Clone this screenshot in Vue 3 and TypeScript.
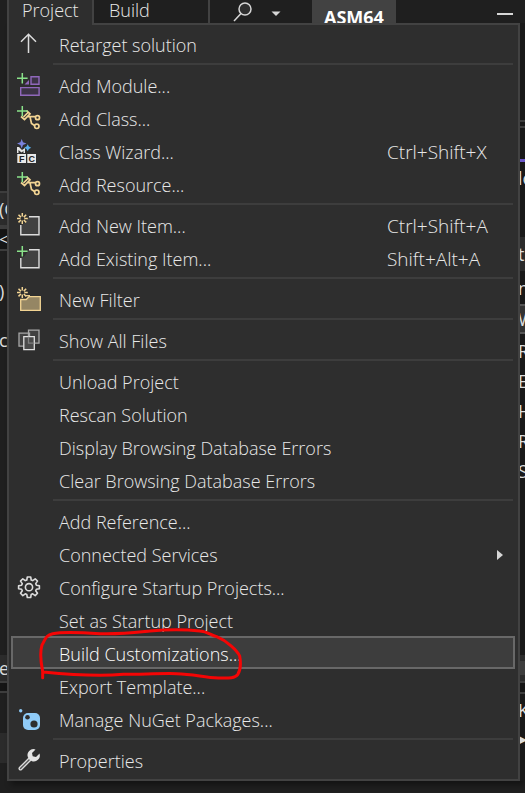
<script setup lang="ts">
type IconName = 'up' | 'module' | 'class' | 'wizard' | 'newItem' | 'addItem' | 'folder' | 'files' | 'gear' | 'nuget' | 'wrench'

interface MenuItem {
  label: string
  icon?: IconName
  keys?: string
  submenu?: boolean
  active?: boolean
}

interface RailBand {
  height: number
  tone: 'plain' | 'row' | 'line' | 'dark' | 'accent' | 'lit'
  text?: string
}

const groups: MenuItem[][] = [
  [{ label: 'Retarget solution', icon: 'up' }],
  [
    { label: 'Add Module...', icon: 'module' },
    { label: 'Add Class...', icon: 'class' },
    { label: 'Class Wizard...', icon: 'wizard', keys: 'Ctrl+Shift+X' },
    { label: 'Add Resource...', icon: 'class' },
  ],
  [
    { label: 'Add New Item...', icon: 'newItem', keys: 'Ctrl+Shift+A' },
    { label: 'Add Existing Item...', icon: 'addItem', keys: 'Shift+Alt+A' },
  ],
  [{ label: 'New Filter', icon: 'folder' }],
  [{ label: 'Show All Files', icon: 'files' }],
  [
    { label: 'Unload Project' },
    { label: 'Rescan Solution' },
    { label: 'Display Browsing Database Errors' },
    { label: 'Clear Browsing Database Errors' },
  ],
  [
    { label: 'Add Reference...' },
    { label: 'Connected Services', submenu: true },
    { label: 'Configure Startup Projects...', icon: 'gear' },
    { label: 'Set as Startup Project' },
    { label: 'Build Customizations...', active: true },
    { label: 'Export Template...' },
    { label: 'Manage NuGet Packages...', icon: 'nuget' },
  ],
  [{ label: 'Properties', icon: 'wrench' }],
]

const leftRail: RailBand[] = [
  { height: 168, tone: 'plain' },
  { height: 2, tone: 'line' },
  { height: 32, tone: 'row', text: '(G' },
  { height: 4, tone: 'line' },
  { height: 20, tone: 'dark', text: '<' },
  { height: 2, tone: 'line' },
  { height: 26, tone: 'plain' },
  { height: 28, tone: 'plain', text: ')' },
  { height: 22, tone: 'plain' },
  { height: 26, tone: 'plain', text: 'c' },
  { height: 302, tone: 'plain' },
  { height: 26, tone: 'row', text: 'e' },
  { height: 2, tone: 'line' },
  { height: 8, tone: 'dark' },
  { height: 2, tone: 'line' },
  { height: 40, tone: 'plain' },
  { height: 30, tone: 'row' },
]

const rightRail: RailBand[] = [
  { height: 97, tone: 'plain' },
  { height: 2, tone: 'line' },
  { height: 4, tone: 'plain' },
  { height: 2, tone: 'line' },
  { height: 31, tone: 'plain' },
  { height: 3, tone: 'accent' },
  { height: 32, tone: 'plain', text: 'lo' },
  { height: 43, tone: 'plain' },
  { height: 34, tone: 'row', text: 't' },
  { height: 33, tone: 'plain', text: 'n' },
  { height: 30, tone: 'lit', text: 'W' },
  { height: 2, tone: 'plain' },
  { height: 30, tone: 'plain', text: 'R' },
  { height: 30, tone: 'plain', text: 'E' },
  { height: 30, tone: 'plain', text: 'H' },
  { height: 30, tone: 'plain', text: 'R' },
  { height: 30, tone: 'plain', text: 'S' },
  { height: 169, tone: 'plain' },
  { height: 6, tone: 'row' },
  { height: 14, tone: 'line' },
  { height: 6, tone: 'row' },
  { height: 2, tone: 'line' },
  { height: 9, tone: 'dark' },
  { height: 2, tone: 'line' },
  { height: 32, tone: 'plain', text: 'K' },
  { height: 24, tone: 'plain', text: '▸' },
]
</script>

<template>
  <div class="window">
    <header class="bar">
      <button class="tab open" type="button">Project</button>
      <button class="tab build" type="button">Build</button>
      <button class="search" type="button" aria-label="Search">
        <svg width="20" height="20" viewBox="0 0 20 20">
          <circle cx="12" cy="7" r="6" fill="#2e2e2e" />
          <path d="M8 11.5 1 19" />
        </svg>
        <svg class="caret" width="10" height="6" viewBox="0 0 10 6"><path class="solid" d="M0.500 0.500h9L5 5z" /></svg>
      </button>
      <span class="solution">ASM64</span>
      <button class="minimize" type="button" aria-label="Minimize">
        <svg width="16" height="2" viewBox="0 0 16 2"><path class="solid" d="M0 0h16v2H0z" /></svg>
      </button>
    </header>

    <main class="body">
      <div class="rail left">
        <div v-for="(band, i) in leftRail" :key="i" class="band" :class="band.tone" :style="{ height: band.height + 'px' }">
          {{ band.text }}
        </div>
      </div>

      <nav class="menu" aria-label="Project">
        <div v-for="(group, g) in groups" :key="g" class="group">
          <button v-for="item in group" :key="item.label" class="item" :class="{ active: item.active }" type="button">
            <span class="icon">
              <svg v-if="item.icon" width="24" height="24" viewBox="0 0 24 24" aria-hidden="true">
                <g v-if="item.icon === 'up'" class="stroke">
                  <path d="M11.500 21V2.500M4 9.700l7.500-7.500 7.500 7.500" stroke-width="1.500" />
                </g>
                <g v-else-if="item.icon === 'module'">
                  <path d="M14 3.700h8v7.600h-8zM3.700 14.600h18.400v7.600H3.700z" fill="#3c3346" stroke="#9068bb" stroke-width="1.400" />
                  <path d="M12 7v4.500H7.500z" fill="#9068bb" />
                  <path d="M5.300 0v10.600M0 5.300h10.600" stroke="#8ae28a" stroke-width="1.500" />
                </g>
                <g v-else-if="item.icon === 'class'">
                  <g fill="none" stroke="#f2d493" stroke-width="1.700">
                    <path d="M9.500 4.500l3.500 3.300-5.500 5.700L4 10.500M6.500 11l5-5M10.500 10.700h8M13 10.700l1.500 6.800 3 2" />
                    <circle cx="20.500" cy="11.700" r="2" />
                    <circle cx="19.800" cy="20.300" r="2.200" />
                  </g>
                  <path d="M5.300 0v10.300M0 5h10.600" stroke="#8ae28a" stroke-width="1.500" />
                </g>
                <g v-else-if="item.icon === 'wizard'">
                  <path d="M0 8h2l3 3 3-2v5H6.500v-2L4.500 13.500 1.500 11v3H0z" fill="#e4e4e4" />
                  <path d="M0.300 15H9v9H0.300zM10.300 15H19v9h-8.700z" fill="#e8e8e8" />
                  <text x="2" y="22.800" class="glyph">F</text>
                  <text x="11.500" y="22.800" class="glyph">C</text>
                  <path d="M4.700 0l1.300 3.300 3.500 1.300L6 6 4.700 9.500 3.400 6 0 4.600l3.400-1.300z" fill="#7a83dd" />
                  <path d="M10.700 5.200l1.200 2.300 2.300 1.200-2.300 1.200-1.200 2.300-1.200-2.300-2.300-1.200 2.300-1.200z" fill="#5aaeea" />
                </g>
                <g v-else-if="item.icon === 'newItem'">
                  <path d="M12 3.800h10v18H3.800V12l3-1z" fill="#414141" />
                  <path d="M12 3.800h10v18H3.800V12" fill="none" stroke="#dcdcdc" stroke-width="1.400" />
                  <path class="spark" d="M5.300 0v3.500M5.300 7.500V11M0 5.500h3.500M7.300 5.500h3.500M1.500 1.700l2.400 2.400M6.800 7l2.400 2.400M9.200 1.700L6.800 4.100M3.900 7L1.500 9.400" />
                </g>
                <g v-else-if="item.icon === 'addItem'">
                  <path d="M12 3.800h10v18H3.800V12l3-1z" fill="#414141" />
                  <path d="M12 3.800h10v18H3.800V12" fill="none" stroke="#dcdcdc" stroke-width="1.400" />
                  <path d="M5.300 0v10.600M0 5.300h10.600" stroke="#8ae28a" stroke-width="1.500" />
                </g>
                <g v-else-if="item.icon === 'folder'">
                  <path d="M3.700 12.500h5.500L12 9.700h11.300v13.600H3.700z" fill="#958664" stroke="#f2d493" stroke-width="1.300" />
                  <path d="M9 8.700h4" stroke="#f2d493" stroke-width="1.300" />
                  <path class="spark" d="M5.300 0v3.500M5.300 7.500V11M0 5.500h3.500M7.300 5.500h3.500M1.500 1.700l2.400 2.400M6.800 7l2.400 2.400M9.200 1.700L6.800 4.100M3.900 7L1.500 9.400" />
                </g>
                <g v-else-if="item.icon === 'files'" stroke-width="1.300">
                  <path d="M11.500 2.200H22v13H11.500zM2 5.200h10.500v13H2z" fill="#414141" stroke="#a8a8a8" />
                  <path d="M6.800 8.700h10.500v13H6.800z" fill="#4a4a4a" stroke="#e0e0e0" />
                  <path d="M11.500 8.700v6.500h5.800" fill="none" stroke="#808080" />
                </g>
                <g v-else-if="item.icon === 'gear'" class="stroke">
                  <path
                    stroke-width="1.600"
                    stroke-linejoin="round"
                    d="M10.300 2h3.400l.5 3 1.500.6 2.500-1.800 2.300 2.300-1.800 2.500.7 1.600 3 .5v3l-3 .5-.7 1.600 1.800 2.500-2.300 2.300-2.500-1.800-1.500.7-.5 3h-3.400l-.5-3-1.500-.7-2.500 1.800-2.300-2.300 1.800-2.500-.7-1.600-3-.5v-3l3-.5.7-1.600-1.800-2.500 2.300-2.300 2.500 1.800 1.500-.6z"
                  />
                  <circle cx="12" cy="12.200" r="3.600" stroke-width="1.600" />
                </g>
                <g v-else-if="item.icon === 'nuget'">
                  <circle cx="3.700" cy="3.700" r="1.700" fill="#8fcbf7" />
                  <rect x="6" y="6" width="17" height="17" rx="5" fill="#8fcbf7" />
                  <circle cx="10.500" cy="10.300" r="2.300" fill="#2e2e2e" />
                  <circle cx="17" cy="17" r="3.600" fill="#2e2e2e" />
                </g>
                <g v-else-if="item.icon === 'wrench'">
                  <path d="M12.500 11.500L3.500 20.500" stroke="#dcdcdc" stroke-width="4" stroke-linecap="round" />
                  <path d="M12 12L3.500 20.500" stroke="#555" stroke-width="1.400" stroke-linecap="round" />
                  <path d="M18.500 1.500a6 6 0 0 0-7.500 8l3.500 3.500a6 6 0 0 0 8-7.500L19 9l-3.300-.7L15 5z" fill="#e4e4e4" />
                </g>
              </svg>
            </span>
            <span class="label">{{ item.label }}</span>
            <kbd v-if="item.keys" class="keys">{{ item.keys }}</kbd>
            <svg v-if="item.submenu" class="arrow" width="6" height="10" viewBox="0 0 6 10"><path d="M0 0l6 5-6 5z" /></svg>
            <svg v-if="item.active" class="marker" width="205" height="62" viewBox="117 0 615 186" aria-hidden="true">
              <path
                d="M128 173V154C122 125 120 95 126 75C136 58 138 45 158 41C190 34 240 37 300 41C360 43 400 38 450 33C510 28 560 29 600 33C620 34 632 45 650 50C680 62 712 92 719 108C723 130 722 150 713 164C706 174 690 175 655 174C610 172 580 162 530 161C470 160 430 163 370 163C310 168 220 165 130 156"
              />
            </svg>
          </button>
        </div>
      </nav>

      <div class="rail right">
        <div v-for="(band, i) in rightRail" :key="i" class="band" :class="band.tone" :style="{ height: band.height + 'px' }">
          {{ band.text }}
        </div>
      </div>
    </main>
  </div>
</template>

<style>
body {
  background: #1f1f1f;
}
</style>

<style scoped>
.window {
  min-height: 100vh;
  overflow: hidden;
  background: #1f1f1f;
  color: #e8e8e8;
  font-family: 'Open Sans', 'Noto Sans', sans-serif;
  font-size: 18px;
  font-weight: 300;
  line-height: 26px;
}

button {
  margin: 0;
  padding: 0;
  border: 0;
  background: none;
  color: inherit;
  font: inherit;
  text-align: left;
}

.bar {
  display: flex;
  height: 23px;
  padding-left: 7px;
}

.tab {
  box-sizing: border-box;
  height: 23px;
  padding-bottom: 3px;
  line-height: 20px;
  border-right: 2px solid #424242;
}

.tab.open {
  position: relative;
  z-index: 1;
  width: 87px;
  height: 25px;
  padding: 0 0 5px 13px;
  border-left: 2px solid #424242;
  background: #2e2e2e;
}

.tab.build {
  width: 116px;
  padding-left: 15px;
}

.search {
  display: flex;
  align-items: center;
  gap: 18px;
  width: 102px;
  padding-left: 23px;
}

.search svg {
  fill: none;
  stroke: #d6d6d6;
  stroke-width: 1.500;
}

.search .caret {
  margin-top: 4px;
}

.search .solid,
.minimize .solid {
  fill: #d6d6d6;
  stroke: none;
}

.solution {
  padding: 0 12px;
  overflow: hidden;
  background: #424242;
  color: #fff;
  font-weight: 700;
  line-height: 35px;
}

.minimize {
  display: flex;
  align-items: center;
  margin-left: auto;
  padding: 5px 12px 0 0;
}

.body {
  display: grid;
  grid-template-columns: 7px minmax(0, 1fr) 5px;
}

.rail {
  height: 0;
  min-height: 100%;
  color: #dcdcdc;
  font-weight: 400;
}

.left {
  text-indent: -1px;
}

.right {
  background: #191919;
  text-indent: -2px;
}

.band {
  display: flex;
  align-items: center;
  overflow: hidden;
  white-space: nowrap;
}

.row {
  background: #2b2b2b;
}

.line {
  background: #3d3d3d;
}

.dark {
  background: #151515;
}

.accent {
  background: #6a57c8;
}

.lit {
  box-sizing: border-box;
  border-top: 2px solid #555;
  border-bottom: 2px solid #555;
  background: #333;
}

.menu {
  padding: 2px 3px 3px 2px;
  border: 2px solid #424242;
  background: #2e2e2e;
  box-shadow: 4px 4px 6px rgba(0, 0, 0, 0.4);
}

.group + .group::before {
  content: '';
  display: block;
  height: 2px;
  margin: 3px 2px 3px 42px;
  background: #3d3d3d;
}

.item {
  position: relative;
  box-sizing: border-box;
  display: grid;
  grid-template-columns: 24px minmax(0, 1fr) 126px;
  column-gap: 18px;
  width: 100%;
  height: 33px;
  padding: 3px 0 0 4px;
  border: 2px solid transparent;
  align-items: start;
  white-space: nowrap;
}

.item.active {
  border-color: #686868;
  background: #3d3d3d;
  color: #fff;
}

.icon {
  height: 24px;
}

.icon svg {
  display: block;
}

.stroke {
  fill: none;
  stroke: #dcdcdc;
}

.spark {
  stroke: #f2d493;
  stroke-width: 1.500;
}

.glyph {
  fill: #202020;
  font: 700 9px 'Liberation Sans', sans-serif;
}

.keys {
  font-family: inherit;
  font-size: 19px;
}

.arrow {
  justify-self: end;
  margin: 8px 10px 0 0;
  fill: #d6d6d6;
}

.marker {
  position: absolute;
  z-index: 1;
  top: -18px;
  left: 26px;
  fill: none;
  stroke: #f50505;
  stroke-width: 9;
  stroke-linecap: round;
  stroke-linejoin: round;
}
</style>
